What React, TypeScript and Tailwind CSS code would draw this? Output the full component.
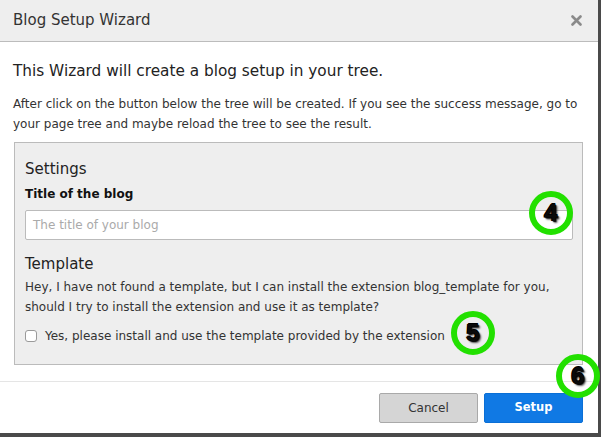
import React from "react";

function Marker({ n, cls }: { n: string; cls: string }) {
  return (
    <div
      className={`absolute w-[44px] h-[44px] rounded-full border-[6px] border-[#22e000] flex items-center justify-center ${cls}`}
    >
      <span
        className="text-[24px] font-bold leading-none text-[#0a0a0a]"
        style={{
          fontFamily: '"Liberation Sans", Arial, sans-serif',
          textShadow: "1px 1px 1px #000, -1px 0 0 #000, 0 -1px 0 #000, 2px 2px 2px rgba(0,0,0,0.6)",
        }}
      >
        {n}
      </span>
    </div>
  );
}

export default function App() {
  return (
    <div
      className="relative w-[601px] h-[437px] bg-[#4a4a4a] overflow-hidden"
      style={{ fontFamily: '"DejaVu Sans", Verdana, sans-serif' }}
    >
      <div className="w-[598px] h-[433px] bg-white flex flex-col">
        <div className="h-[42px] bg-[#eeeeee] border-b border-[#bcbcbc] flex items-center justify-between pl-[13px] pr-[16px]">
          <span className="text-[15px] text-[#333]">Blog Setup Wizard</span>
          <svg width="11" height="11" viewBox="0 0 11 11">
            <path d="M1.5 1.5 L9.5 9.5 M9.5 1.5 L1.5 9.5" stroke="#8a8a8a" strokeWidth="2.6" strokeLinecap="round" />
          </svg>
        </div>
        <div className="flex-1 px-[13px] pt-[19px]">
          <div className="text-[15.3px] leading-[20px] text-[#222]">
            This Wizard will create a blog setup in your tree.
          </div>
          <p className="mt-[13px] text-[12px] leading-[20px] text-[#333]">
            After click on the button below the tree will be created. If you see the success message, go to
            your page tree and maybe reload the tree to see the result.
          </p>
          <div className="mt-[8px] ml-[1px] w-[569px] bg-[#eeeeee] border border-[#bbbbbb] pt-[16px] pb-[19px] pl-[10px] pr-[9px]">
            <div className="text-[15px] leading-[20px] text-[#222]">Settings</div>
            <div className="mt-[7px] text-[12px] leading-[16px] font-bold text-[#111]">Title of the blog</div>
            <div className="mt-[8px] h-[30px] bg-white border border-[#bbbbbb] rounded-[2px] flex items-center px-[7px] text-[12px] text-[#aaaaaa]">
              The title of your blog
            </div>
            <div className="mt-[14px] text-[15px] leading-[20px] text-[#222]">Template</div>
            <p className="mt-[3px] text-[12px] leading-[20px] text-[#333]">
              Hey, I have not found a template, but I can install the extension blog_template for you,
              should I try to install the extension and use it as template?
            </p>
            <div className="mt-[10px] h-[18px] flex items-center gap-[8px] text-[12px] text-[#333]">
              <span className="w-[12px] h-[12px] rounded-[3px] border border-[#9a9a9a] bg-white"></span>
              <span>Yes, please install and use the template provided by the extension</span>
            </div>
          </div>
        </div>
        <div className="h-[52px] border-t border-[#e5e5e5] flex items-start justify-end gap-[6px] pt-[11px] pr-[15px]">
          <button className="w-[99px] h-[30px] bg-[#d5d5d5] border border-[#a9a9a9] rounded-[2px] text-[12px] text-[#333]">
            Cancel
          </button>
          <button className="w-[99px] h-[30px] bg-[#1079e4] border border-[#0a6fd6] rounded-[2px] text-[11.5px] font-bold text-white">
            Setup
          </button>
        </div>
      </div>
      <Marker n="4" cls="left-[529px] top-[191px]" />
      <Marker n="5" cls="left-[451px] top-[311px]" />
      <Marker n="6" cls="left-[556px] top-[354px]" />
    </div>
  );
}
